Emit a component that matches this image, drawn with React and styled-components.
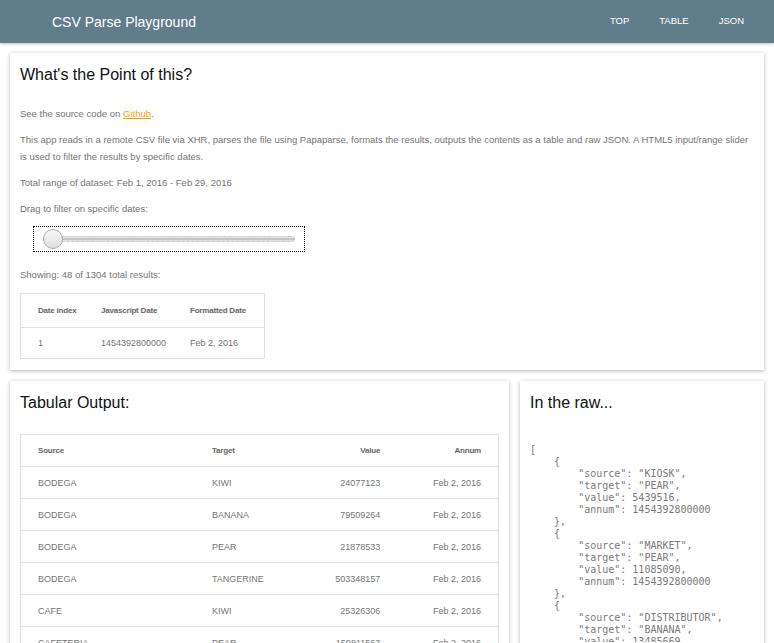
import React from "react";
import styled, { createGlobalStyle } from "styled-components";

const GlobalStyle = createGlobalStyle`
  body {
    margin: 0;
    background: #fff;
    font-family: "Liberation Sans", Arial, sans-serif;
  }
`;

const TopBar = styled.header`
  height: 43px;
  background: #607d8b;
  box-shadow: 0 1px 3px rgba(0, 0, 0, 0.25);
  display: flex;
  align-items: center;
  justify-content: space-between;
  padding: 0 30px 0 52px;
  color: #fff;
`;

const Brand = styled.div`
  font-size: 14px;
  padding-top: 1px;
`;

const Nav = styled.nav`
  display: flex;
  gap: 30px;
  font-size: 9.5px;
  padding-bottom: 3px;
`;

const Page = styled.main`
  display: grid;
  grid-template-columns: 499px 244px;
  column-gap: 11px;
  row-gap: 11px;
  padding: 10px 10px 0;
`;

const Card = styled.section`
  grid-column: ${(p) => (p.wide ? "1 / span 2" : "auto")};
  background: #fff;
  box-shadow: 0 1px 4px rgba(0, 0, 0, 0.3);
  padding: 13px 10px 11px;
`;

const Title = styled.h2`
  margin: 0 0 ${(p) => p.gap || "21px"};
  font-size: 16px;
  font-weight: normal;
  color: #111;
`;

const Para = styled.p`
  margin: 0 0 ${(p) => p.gap || "9px"};
  font-size: 9.5px;
  line-height: 17px;
  color: #757575;
`;

const Link = styled.a`
  color: #ffa000;
`;

const SliderBox = styled.div`
  box-sizing: border-box;
  width: 272px;
  height: 26px;
  margin: 4px 0 14px 13px;
  border: 1px dotted #000;
  display: flex;
  align-items: center;
  padding: 0 9px 0 11px;
  position: relative;
`;

const Track = styled.div`
  flex: 1;
  height: 4px;
  border: 1px dashed #ccc;
  border-radius: 3px;
  background: linear-gradient(#f4f4f4, #b5b5b5 50%, #eee);
`;

const Thumb = styled.div`
  position: absolute;
  left: 9px;
  top: 2px;
  width: 18px;
  height: 18px;
  border-radius: 50%;
  border: 1px solid #aaa;
  background: linear-gradient(#fafafa, #ddd);
`;

const Table = styled.table`
  border-collapse: collapse;
  border: 1px solid #e0e0e0;
  width: ${(p) => p.width};
  font-size: 9px;
  color: #757575;
  white-space: nowrap;
`;

const Th = styled.th`
  text-align: ${(p) => (p.right ? "right" : "left")};
  font-weight: bold;
  font-size: 8px;
  color: #666;
  height: ${(p) => p.h || "31px"};
  padding: 0 17px;
  border-bottom: 1px solid #e0e0e0;
  letter-spacing: -0.2px;
`;

const Td = styled.td`
  text-align: ${(p) => (p.right ? "right" : "left")};
  height: 31px;
  padding: 0 17px;
  border-bottom: 1px solid #e0e0e0;
`;

const SmallTh = styled(Th)`
  padding: 0 0 0 17px;
`;

const SmallTd = styled(Td)`
  padding: 0 0 0 17px;
  height: 30px;
`;

const Raw = styled.pre`
  margin: 0;
  font-family: "DejaVu Sans Mono", monospace;
  font-size: 10px;
  line-height: 12px;
  color: #7a7a7a;
  height: 198px;
  overflow: hidden;
`;

const rows = [
  ["BODEGA", "KIWI", "24077123"],
  ["BODEGA", "BANANA", "79509264"],
  ["BODEGA", "PEAR", "21878533"],
  ["BODEGA", "TANGERINE", "503348157"],
  ["CAFE", "KIWI", "25326306"],
  ["CAFETERIA", "PEAR", "159811563"],
];

const json = `[
    {
        "source": "KIOSK",
        "target": "PEAR",
        "value": 5439516,
        "annum": 1454392800000
    },
    {
        "source": "MARKET",
        "target": "PEAR",
        "value": 11085090,
        "annum": 1454392800000
    },
    {
        "source": "DISTRIBUTOR",
        "target": "BANANA",
        "value": 13485669,
        "annum": 1454392800000
    },`;

export default function App() {
  return (
    <>
      <GlobalStyle />
      <TopBar>
        <Brand>CSV Parse Playground</Brand>
        <Nav>
          <span>TOP</span>
          <span>TABLE</span>
          <span>JSON</span>
        </Nav>
      </TopBar>
      <Page>
        <Card wide>
          <Title>What's the Point of this?</Title>
          <Para>
            See the source code on <Link href="#">Github</Link>.
          </Para>
          <Para>
            This app reads in a remote CSV file via XHR, parses the file using Papaparse, formats the results,
            outputs the contents as a table and raw JSON. A HTML5 input/range slider is used to filter the results
            by specific dates.
          </Para>
          <Para>Total range of dataset: Feb 1, 2016 - Feb 29, 2016</Para>
          <Para>Drag to filter on specific dates:</Para>
          <SliderBox>
            <Track />
            <Thumb />
          </SliderBox>
          <Para gap="10px">Showing: 48 of 1304 total results:</Para>
          <Table width="245px">
            <thead>
              <tr>
                <SmallTh h="33px" style={{ width: "46px" }}>Date index</SmallTh>
                <SmallTh h="33px" style={{ width: "72px" }}>Javascript Date</SmallTh>
                <SmallTh h="33px">Formatted Date</SmallTh>
              </tr>
            </thead>
            <tbody>
              <tr>
                <SmallTd>1</SmallTd>
                <SmallTd>1454392800000</SmallTd>
                <SmallTd>Feb 2, 2016</SmallTd>
              </tr>
            </tbody>
          </Table>
        </Card>
        <Card>
          <Title gap="22px">Tabular Output:</Title>
          <Table width="479px">
            <thead>
              <tr>
                <Th style={{ width: "140px" }}>Source</Th>
                <Th>Target</Th>
                <Th right>Value</Th>
                <Th right>Annum</Th>
              </tr>
            </thead>
            <tbody>
              {rows.map((r, i) => (
                <tr key={i}>
                  <Td>{r[0]}</Td>
                  <Td>{r[1]}</Td>
                  <Td right>{r[2]}</Td>
                  <Td right>Feb 2, 2016</Td>
                </tr>
              ))}
            </tbody>
          </Table>
        </Card>
        <Card>
          <Title gap="32px">In the raw...</Title>
          <Raw>{json}</Raw>
        </Card>
      </Page>
    </>
  );
}
